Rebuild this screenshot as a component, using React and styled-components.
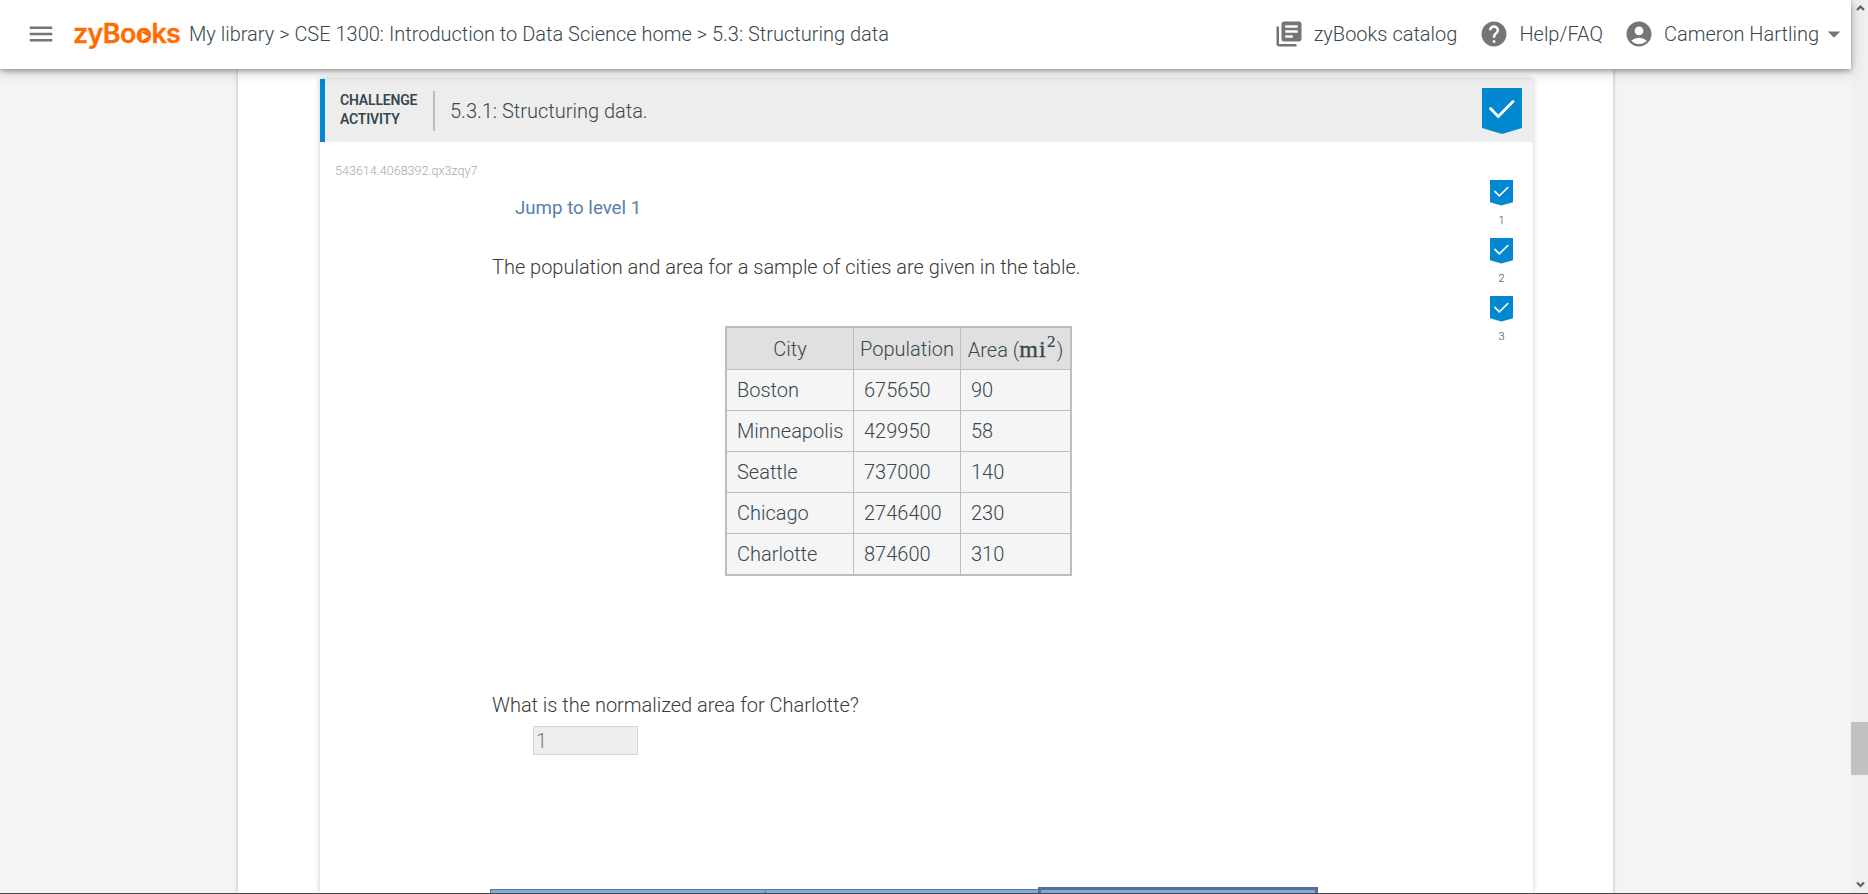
import React from 'react';
import styled, { createGlobalStyle } from 'styled-components';
import { MdMenu, MdLibraryBooks, MdHelp, MdAccountCircle, MdArrowDropDown } from 'react-icons/md';

const GlobalStyle = createGlobalStyle`
  * { box-sizing: border-box; }
  body {
    margin: 0;
    overflow: hidden;
    background: #f4f4f4;
    color: #37474f;
    font-family: Roboto, "Liberation Sans", sans-serif;
    font-size: 20px;
    font-weight: 300;
  }
`;

const Window = styled.div`
  display: flex;
  height: 894px;
  border-bottom: 1px solid #484848;
  overflow: hidden;
`;

const Viewport = styled.div`
  display: flex;
  flex-direction: column;
  flex: 1;
  min-width: 0;
`;

const TopBar = styled.header`
  position: relative;
  z-index: 1;
  display: flex;
  align-items: center;
  flex: none;
  height: 69px;
  padding: 0 2px 1px 26px;
  background: #fff;
  box-shadow: 0 2px 5px rgba(0, 0, 0, 0.3), 0 2px 14px rgba(0, 0, 0, 0.2);
  white-space: nowrap;
  > svg, div > svg { display: block; flex: none; color: #757575; }
`;

const Logo = styled.span`
  width: 116px;
  margin-left: 17px;
  color: #ff6c00;
  font: 600 27px/34px Inter, sans-serif;
  letter-spacing: -0.7px;
  -webkit-text-stroke: 0.3px currentColor;
`;

const PlayO = styled.span`
  position: relative;
  svg {
    position: absolute;
    left: 3px;
    top: 13.5px;
    width: 11px;
    height: 11px;
  }
`;

const Crumbs = styled.nav`
  flex: 1;
`;

const MenuItem = styled.div`
  display: flex;
  align-items: center;
  gap: 10px;
  margin-left: ${(p) => p.$gap}px;
`;

const Page = styled.main`
  display: flex;
  flex: 1;
  width: 1375px;
  min-height: 0;
  margin-left: 238px;
  padding: 10px 80px 0 82px;
  background: #fff;
  box-shadow: 0 0 4px rgba(0, 0, 0, 0.25);
`;

const Activity = styled.section`
  display: flex;
  flex-direction: column;
  flex: 1;
  box-shadow: 0 0 5px rgba(0, 0, 0, 0.22);
`;

const ActivityHeader = styled.div`
  display: flex;
  align-items: center;
  height: 63px;
  margin-right: -1px;
  padding: 0 12px 0 15px;
  border-left: 5px solid #0288d1;
  background: #ededed;
`;

const Kind = styled.div`
  width: 93px;
  padding-bottom: 2px;
  font-size: 14px;
  font-weight: 600;
  line-height: 19px;
  letter-spacing: -0.18px;
`;

const Title = styled.h1`
  flex: 1;
  margin: 0;
  padding-left: 15px;
  border-left: 2px solid #bdbdbd;
  font-size: 20px;
  font-weight: 300;
  line-height: 40px;
`;

const ActivityBody = styled.div`
  display: flex;
  flex: 1;
  min-height: 0;
  padding: 19px 20px 0 15px;
`;

const Content = styled.div`
  display: flex;
  flex-direction: column;
  flex: 1;
  color: #3a3a3a;
`;

const ActivityId = styled.div`
  height: 20px;
  color: #a8a8a8;
  font-size: 12.55px;
  line-height: 20px;
`;

const JumpLink = styled.a`
  margin: 16px 0 0 180px;
  color: #5580b0;
  font-size: 18.7px;
  font-weight: 400;
  line-height: 22px;
`;

const Text = styled.p`
  margin: ${(p) => p.$top}px 0 0 157px;
  line-height: 24px;
  letter-spacing: -0.015px;
`;

const Table = styled.table`
  width: 347px;
  height: 250px;
  margin: 47px 0 0 390px;
  border: 2px solid #bdbdbd;
  border-spacing: 0;
  table-layout: fixed;
  background: #f5f5f5;
  color: #37474f;
`;

const Cell = styled.td`
  height: 41px;
  padding: 0 0 0 10px;
  border: 0 solid #bdbdbd;
  border-right-width: 1px;
  border-bottom-width: 1px;
  font-weight: 300;
  line-height: 24px;
  white-space: nowrap;
  &:last-child { border-right-width: 0; }
  tbody > tr:last-child > & { height: 40px; border-bottom-width: 0; }
`;

const HeadCell = styled(Cell).attrs({ as: 'th' })`
  height: 42px;
  padding: ${(p) => (p.$drop ? 3 : 0)}px 0 0;
  background: #e0e0e0;
  text-align: center;
`;

const Unit = styled.span`
  font-family: "Liberation Serif", serif;
  font-size: 24px;
  font-weight: 400;
  line-height: 20px;
  letter-spacing: 1.2px;
  -webkit-text-stroke: 0.35px currentColor;
  sup {
    font-size: 17px;
    line-height: 0;
    vertical-align: 10px;
    -webkit-text-stroke-width: 0.2px;
  }
`;

const Answer = styled.input`
  width: 105px;
  height: 29px;
  margin: 9px 0 0 198px;
  padding: 0 2px;
  border: 1px solid #cfd8dc;
  background: #eee;
  color: #777;
  font: 300 20px Roboto, sans-serif;
`;

const Steps = styled.div`
  display: flex;
  align-items: flex-end;
  margin: auto 0 0 155px;
`;

const Step = styled.div`
  width: ${(p) => p.$width}px;
  height: ${(p) => (p.$current ? 6 : 4)}px;
  border: solid ${(p) => (p.$current ? '#566f95' : '#527ca4')};
  border-width: ${(p) => (p.$current ? '3px 3px 0' : '1px 0 0 1px')};
  background: #82aad4;
`;

const Levels = styled.div`
  display: flex;
  flex-direction: column;
  width: 23px;
  padding-top: 19px;
`;

const Level = styled.div`
  display: flex;
  flex-direction: column;
  align-items: center;
  height: 58px;
  font-size: 11px;
  line-height: 14px;
  svg { margin-bottom: 8px; }
`;

const BadgeSvg = styled.svg`
  display: block;
  flex: none;
`;

const ScrollBar = styled.div`
  display: flex;
  flex-direction: column;
  align-items: center;
  flex: none;
  width: 17px;
  background: #f0f0f0;
`;

const Thumb = styled.div`
  width: 17px;
  height: 53px;
  margin: 705px 0 101px;
  background: #c1c1c1;
`;

const Badge = ({ width, height }) => (
  <BadgeSvg width={width} height={height} viewBox="0 0 40 46" preserveAspectRatio="none">
    <path d="M0 0h40v40l-20 6-20-6z" fill="#0288d1" />
    <path d="M8.5 20.5l7.7 8L31 13.5" fill="none" stroke="#fff" strokeWidth="2.8" strokeLinecap="round" />
  </BadgeSvg>
);

const Arrow = ({ down }) => (
  <svg width="17" height="17" viewBox="0 0 17 17">
    <path d={down ? 'M6 6.5l3.5 3.5L13 6.5' : 'M6 10l3.5-3.5L13 10'} fill="none" stroke="#606060" strokeWidth="2.2" />
  </svg>
);

const cities = [
  ['Boston', '675650', '90'],
  ['Minneapolis', '429950', '58'],
  ['Seattle', '737000', '140'],
  ['Chicago', '2746400', '230'],
  ['Charlotte', '874600', '310'],
];

export default function App() {
  return (
    <>
      <GlobalStyle />
      <Window>
        <Viewport>
          <TopBar>
            <MdMenu size={30} />
            <Logo>
              zyBo
              <PlayO>
                o
                <svg viewBox="0 0 11 11">
                  <circle cx="5.5" cy="5.5" r="5.2" fill="#ff6c00" />
                  <path d="M2.6 1.4L9.4 5.5L2.6 9.6z" fill="#fff" />
                </svg>
              </PlayO>
              ks
            </Logo>
            <Crumbs>My library &gt; CSE 1300: Introduction to Data Science home &gt; 5.3: Structuring data</Crumbs>
            <MenuItem $gap={0}><MdLibraryBooks size={30} />zyBooks catalog</MenuItem>
            <MenuItem $gap={22}><MdHelp size={30} />Help/FAQ</MenuItem>
            <MenuItem $gap={21}><MdAccountCircle size={30} />Cameron Hartling</MenuItem>
            <MdArrowDropDown size={30} />
          </TopBar>
          <Page>
            <Activity>
              <ActivityHeader>
                <Kind>CHALLENGE<br />ACTIVITY</Kind>
                <Title>5.3.1: Structuring data.</Title>
                <Badge width={40} height={46} />
              </ActivityHeader>
              <ActivityBody>
                <Content>
                  <ActivityId>543614.4068392.qx3zqy7</ActivityId>
                  <JumpLink>Jump to level 1</JumpLink>
                  <Text $top={36}>The population and area for a sample of cities are given in the table.</Text>
                  <Table>
                    <colgroup><col width="127" /><col width="107" /><col /></colgroup>
                    <thead>
                      <tr>
                        <HeadCell>City</HeadCell>
                        <HeadCell>Population</HeadCell>
                        <HeadCell $drop>Area (<Unit>mi<sup>2</sup></Unit>)</HeadCell>
                      </tr>
                    </thead>
                    <tbody>
                      {cities.map((row) => (
                        <tr key={row[0]}>{row.map((value) => <Cell key={value}>{value}</Cell>)}</tr>
                      ))}
                    </tbody>
                  </Table>
                  <Text $top={117}>What is the normalized area for Charlotte?</Text>
                  <Answer defaultValue="1" />
                  <Steps>
                    <Step $width={275} />
                    <Step $width={273} />
                    <Step $width={280} $current />
                  </Steps>
                </Content>
                <Levels>
                  {[1, 2, 3].map((n) => <Level key={n}><Badge width={23} height={25.5} />{n}</Level>)}
                </Levels>
              </ActivityBody>
            </Activity>
          </Page>
        </Viewport>
        <ScrollBar>
          <Arrow />
          <Thumb />
          <Arrow down />
        </ScrollBar>
      </Window>
    </>
  );
}
